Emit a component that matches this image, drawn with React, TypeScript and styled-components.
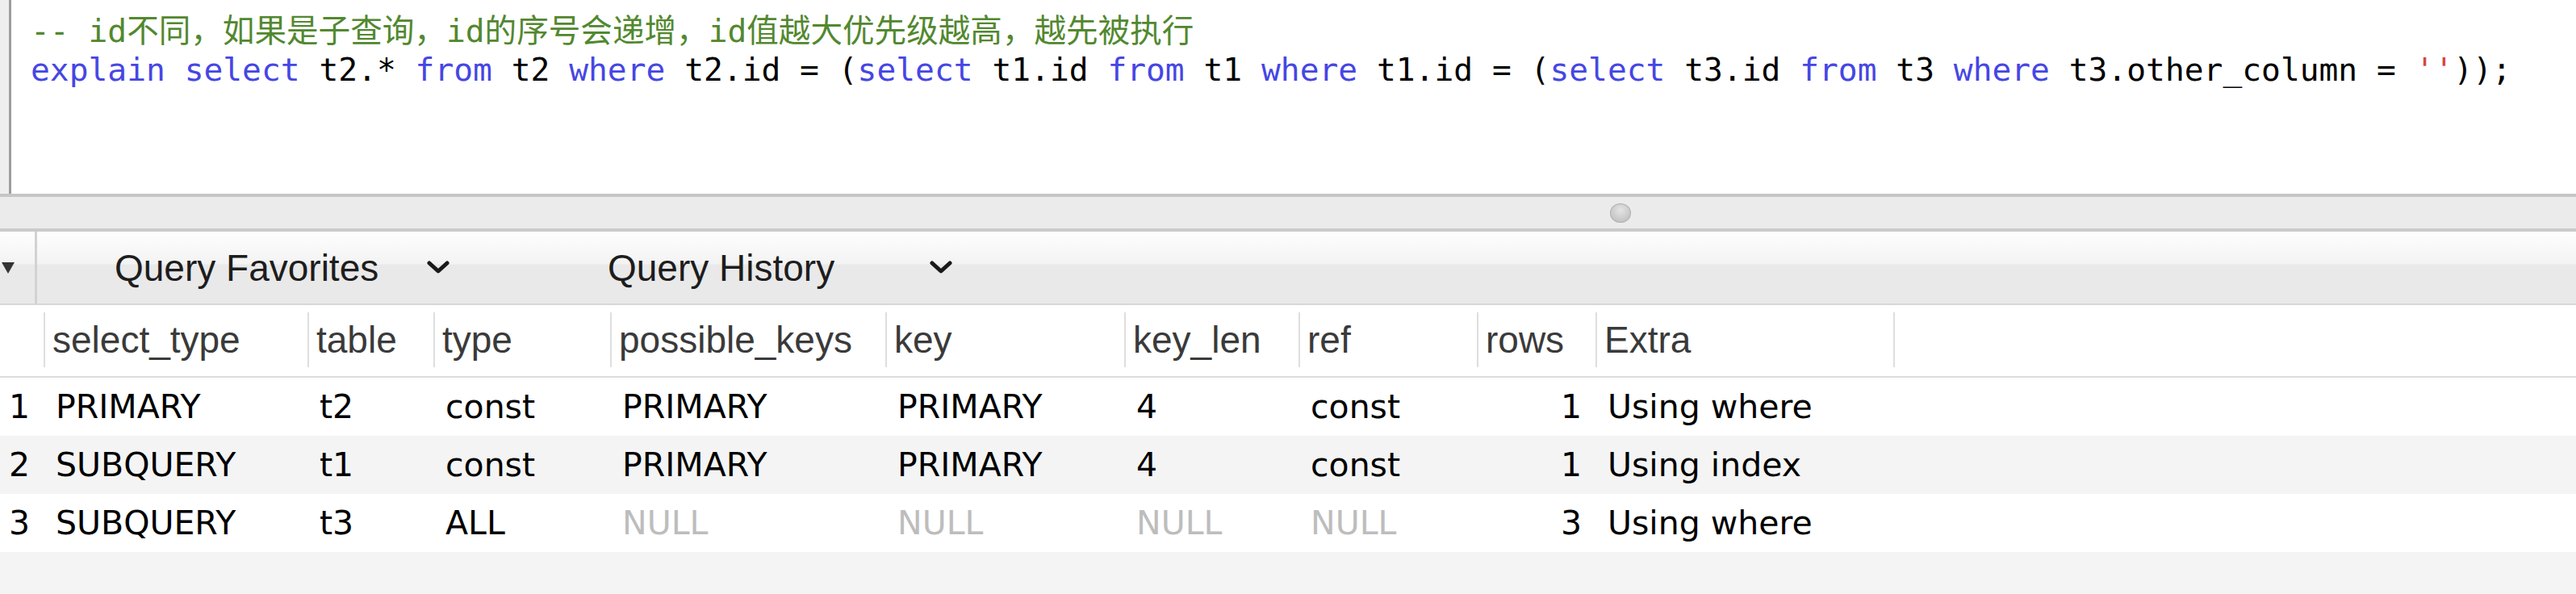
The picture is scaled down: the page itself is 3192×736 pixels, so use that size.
import React from "react";
import styled, { createGlobalStyle, css } from "styled-components";

const GlobalStyle = createGlobalStyle`
  *, *::before, *::after { box-sizing: border-box; }
  html, body { margin: 0; padding: 0; background: #f4f4f4; }
  #root { width: 3192px; height: 736px; }
`;

const Window = styled.div`
  display: flex;
  flex-direction: column;
  width: 3192px;
  height: 736px;
  overflow: hidden;
  background: #f4f4f4;
`;

const Editor = styled.div`
  flex: none;
  display: flex;
  height: 240px;
  background: #ffffff;
`;

const Gutter = styled.div`
  flex: none;
  width: 14px;
  background: #eeeeee;
  border-right: 3px solid #9d9d9d;
`;

const Code = styled.pre`
  margin: 0;
  padding: 14px 0 0 24px;
  font-family: "DejaVu Sans Mono", "Noto Sans CJK SC", monospace;
  font-size: 39.6px;
  line-height: 48px;
  color: #000000;
  white-space: pre;
`;

const Token = styled.span<{ $kind: "kw" | "comment" | "str" | "plain" }>`
  color: ${(p) =>
    p.$kind === "kw"
      ? "#4646e4"
      : p.$kind === "comment"
      ? "#52882f"
      : p.$kind === "str"
      ? "#d8433e"
      : "#000000"};
`;

const Splitter = styled.div`
  flex: none;
  display: flex;
  align-items: center;
  height: 47px;
  padding-left: 1995px;
  background: #ebebeb;
  border-top: 4px solid #c6c6c6;
  border-bottom: 4px solid #cbcbcb;
`;

const Grip = styled.div`
  width: 26px;
  height: 24px;
  border-radius: 50%;
  background: radial-gradient(circle at 50% 35%, #e4e4e4 0%, #c4c4c4 70%, #b8b8b8 100%);
  box-shadow: inset 0 0 0 1px #b3b3b3;
`;

const Toolbar = styled.div`
  flex: none;
  display: flex;
  height: 91px;
  border-bottom: 2px solid #d6d6d6;
  background: linear-gradient(
    to bottom,
    #fefefe 0px,
    #f3f3f3 40px,
    #e9e9e9 41px,
    #e9e9e9 100%
  );
`;

const DisclosureCell = styled.div`
  flex: none;
  display: flex;
  align-items: center;
  width: 46px;
  padding-left: 1px;
  border-right: 3px solid #d2d2d2;
`;

const PopupButton = styled.div<{ $textWidth: number }>`
  flex: none;
  display: grid;
  grid-template-columns: ${(p) => p.$textWidth}px 28px;
  align-items: center;
  width: 611px;
  padding-left: 96px;
  font-family: "Liberation Sans", Arial, sans-serif;
  font-size: 46px;
  color: #1d1d1d;
  white-space: nowrap;
`;

const columns = css`
  display: grid;
  grid-template-columns: 54px 327px 156px 219px 341px 296px 216px 221px 147px 369px 1fr;
`;

const HeaderRow = styled.div`
  ${columns};
  flex: none;
  height: 90px;
  background: #ffffff;
  border-bottom: 2px solid #dcdcdc;
`;

const HeaderCell = styled.div<{ $sep?: boolean }>`
  position: relative;
  display: flex;
  align-items: center;
  padding-left: 11px;
  padding-bottom: 2px;
  font-family: "Liberation Sans", Arial, sans-serif;
  font-size: 46px;
  color: #3a3a3a;
  white-space: nowrap;
  ${(p) =>
    p.$sep &&
    css`
      &::before {
        content: "";
        position: absolute;
        left: 0;
        top: 9px;
        bottom: 11px;
        width: 2px;
        background: #dedede;
      }
    `}
`;

const DataRow = styled.div<{ $alt?: boolean }>`
  ${columns};
  flex: none;
  height: 72px;
  background: ${(p) => (p.$alt ? "#f4f4f4" : "#ffffff")};
`;

const DataCell = styled.div<{ $null?: boolean; $right?: boolean }>`
  display: flex;
  align-items: center;
  justify-content: ${(p) => (p.$right ? "flex-end" : "flex-start")};
  padding: ${(p) => (p.$right ? "0 17px 0 0" : "0 0 0 15px")};
  font-family: "DejaVu Sans", sans-serif;
  font-size: 41px;
  color: ${(p) => (p.$null ? "#bdbdbd" : "#000000")};
  white-space: nowrap;
`;

const Filler = styled.div`
  flex: 1;
  background: #f4f4f4;
`;

const Triangle = () => (
  <svg width="18" height="17" viewBox="0 0 18 17">
    <path d="M1 2 L17 2 L9 16 Z" fill="#333333" />
  </svg>
);

const Chevron = () => (
  <svg width="28" height="17" viewBox="0 0 28 17">
    <polyline
      points="3,3 14,13 25,3"
      fill="none"
      stroke="#1a1a1a"
      strokeWidth="5"
      strokeLinecap="round"
      strokeLinejoin="round"
    />
  </svg>
);

type Cell = { v: string; nul?: boolean };

const headers = [
  "",
  "select_type",
  "table",
  "type",
  "possible_keys",
  "key",
  "key_len",
  "ref",
  "rows",
  "Extra",
  "",
];

const rows: Cell[][] = [
  [
    { v: "1" },
    { v: "PRIMARY" },
    { v: "t2" },
    { v: "const" },
    { v: "PRIMARY" },
    { v: "PRIMARY" },
    { v: "4" },
    { v: "const" },
    { v: "1" },
    { v: "Using where" },
  ],
  [
    { v: "2" },
    { v: "SUBQUERY" },
    { v: "t1" },
    { v: "const" },
    { v: "PRIMARY" },
    { v: "PRIMARY" },
    { v: "4" },
    { v: "const" },
    { v: "1" },
    { v: "Using index" },
  ],
  [
    { v: "3" },
    { v: "SUBQUERY" },
    { v: "t3" },
    { v: "ALL" },
    { v: "NULL", nul: true },
    { v: "NULL", nul: true },
    { v: "NULL", nul: true },
    { v: "NULL", nul: true },
    { v: "3" },
    { v: "Using where" },
  ],
];

const K = ({ children }: { children: React.ReactNode }) => (
  <Token $kind="kw">{children}</Token>
);

export default function App() {
  return (
    <>
      <GlobalStyle />
      <Window>
        <Editor>
          <Gutter />
          <Code>
            <Token $kind="comment">
              -- id不同，如果是子查询，id的序号会递增，id值越大优先级越高，越先被执行
            </Token>
            {"\n"}
            <K>explain</K> <K>select</K> t2.* <K>from</K> t2 <K>where</K> t2.id = (
            <K>select</K> t1.id <K>from</K> t1 <K>where</K> t1.id = (<K>select</K> t3.id{" "}
            <K>from</K> t3 <K>where</K> t3.other_column = <Token $kind="str">''</Token>));
          </Code>
        </Editor>
        <Splitter>
          <Grip />
        </Splitter>
        <Toolbar>
          <DisclosureCell>
            <Triangle />
          </DisclosureCell>
          <PopupButton $textWidth={387}>
            <span>Query Favorites</span>
            <Chevron />
          </PopupButton>
          <PopupButton $textWidth={399}>
            <span>Query History</span>
            <Chevron />
          </PopupButton>
        </Toolbar>
        <HeaderRow>
          {headers.map((h, i) => (
            <HeaderCell key={i} $sep={i > 0}>
              {h}
            </HeaderCell>
          ))}
        </HeaderRow>
        {rows.map((r, ri) => (
          <DataRow key={ri} $alt={ri % 2 === 1}>
            {r.map((c, ci) => (
              <DataCell key={ci} $null={c.nul} $right={ci === 0 || ci === 8}>
                {c.v}
              </DataCell>
            ))}
          </DataRow>
        ))}
        <Filler />
      </Window>
    </>
  );
}
